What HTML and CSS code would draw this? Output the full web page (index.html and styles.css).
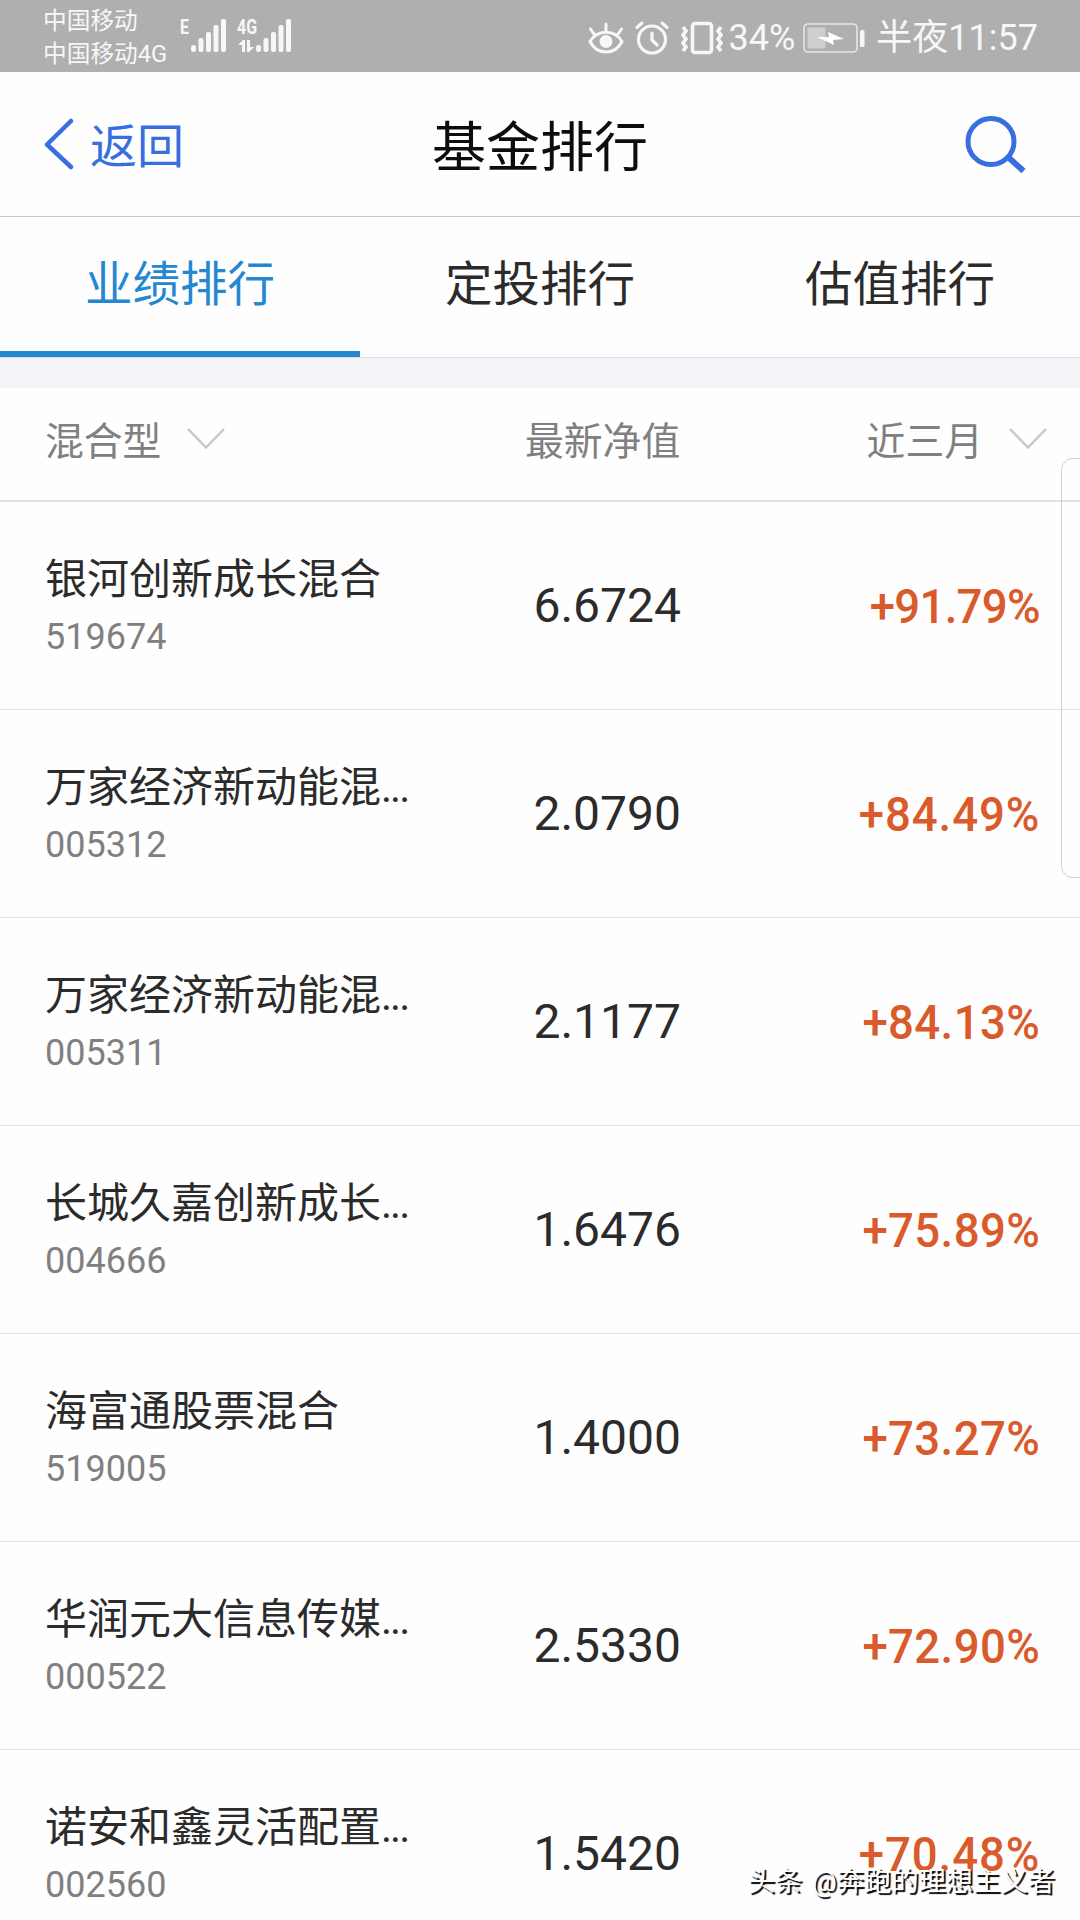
FILE: index.html
```html
<!DOCTYPE html>
<html lang="zh-CN">
<head>
    <meta charset="UTF-8">
    <meta name="viewport" content="width=device-width, initial-scale=1.0">
    <title>基金排行</title>
    <link rel="stylesheet" href="styles.css">
</head>
<body>
    <div class="status-bar">
        <div class="carriers">
            <span>中国移动</span>
            <span>中国移动4G</span>
        </div>
        <svg class="signals" width="114" height="40" viewBox="0 0 114 40">
            <g fill="#f7f7f7">
                <text class="net-label" x="0" y="19" textLength="9" lengthAdjust="spacingAndGlyphs">E</text>
                <rect x="11" y="30" width="5" height="7" rx="2.5"/>
                <rect x="18.5" y="23" width="5" height="14" rx="2"/>
                <rect x="26" y="17" width="5" height="20" rx="2"/>
                <rect x="33.5" y="10" width="5" height="27" rx="2"/>
                <rect x="41" y="4" width="5" height="33" rx="2"/>
                <text class="net-label" x="57" y="19" textLength="20" lengthAdjust="spacingAndGlyphs">4G</text>
                <path d="M58 30l5-5h2v12h-3v-7zM67 25h3v7h4l-5 5h-2z"/>
                <rect x="76" y="30" width="5" height="7" rx="2.5"/>
                <rect x="83.5" y="23" width="5" height="14" rx="2"/>
                <rect x="91" y="17" width="5" height="20" rx="2"/>
                <rect x="98.5" y="10" width="5" height="27" rx="2"/>
                <rect x="106" y="4" width="5" height="33" rx="2"/>
            </g>
        </svg>
        <div class="status-right">
            <svg width="36" height="34" viewBox="0 0 36 34" fill="none" stroke="#f7f7f7" stroke-width="3" stroke-linecap="round">
                <path d="M2 20.5C9 8 27 8 34 20.5C27 34.5 9 34.5 2 20.5z"/>
                <path d="M18 10V3M6 13L2.5 8M30 13l3.5-5"/>
                <circle cx="18" cy="20.5" r="6.5" fill="#f7f7f7" stroke="none"/>
            </svg>
            <svg width="34" height="34" viewBox="0 0 34 34" fill="none" stroke="#f7f7f7" stroke-width="3.2" stroke-linecap="round">
                <circle cx="17" cy="18.5" r="13.5"/>
                <path d="M17 12v7l5 5M2 6.500l5-4.500M32 6.500l-5-4.500"/>
            </svg>
            <svg width="44" height="34" viewBox="0 0 44 34" fill="none" stroke="#f7f7f7" stroke-width="3.6">
                <rect x="12.5" y="2.500" width="19" height="29" rx="2.5"/>
                <path d="M3 6l3 4-3 4 3 4-3 4 3 4-3 4M41 6l-3 4 3 4-3 4 3 4-3 4 3 4"/>
            </svg>
            <span class="battery-text">34%</span>
            <svg width="62" height="30" viewBox="0 0 62 30">
                <rect x="1" y="1" width="53" height="28" rx="4" fill="none" stroke="#e6e6e6" stroke-width="1.6"/>
                <rect x="4.5" y="4.500" width="18" height="21" fill="#cfcfcf"/>
                <path d="M14 14l12 0-1-5 16 7-11 1 1 5z" fill="#fff"/>
                <rect x="57" y="7" width="4.5" height="17" rx="1.5" fill="#f7f7f7"/>
            </svg>
            <span class="clock">半夜11:57</span>
        </div>
    </div>

    <div class="header">
        <a class="back">
            <svg width="30" height="52" viewBox="0 0 30 52" fill="none" stroke="#376fe0" stroke-width="4.5" stroke-linecap="round" stroke-linejoin="round">
                <path d="M27 3L3 26.5L27 49"/>
            </svg>
            <span>返回</span>
        </a>
        <h1>基金排行</h1>
        <svg class="search" width="62" height="60" viewBox="0 0 62 60" fill="none" stroke="#376fe0" stroke-width="5">
            <circle cx="26" cy="27.5" r="23"/>
            <path d="M43 43L58.5 57" stroke-width="6"/>
        </svg>
    </div>

    <div class="tabs">
        <div class="tab active">业绩排行</div>
        <div class="tab">定投排行</div>
        <div class="tab">估值排行</div>
    </div>

    <div class="filters">
        <div class="filter-type">
            <span>混合型</span>
            <svg width="40" height="24" viewBox="0 0 40 24" fill="none" stroke="#c8c8c8" stroke-width="2.5"><path d="M2 2L20 20.5L38 2"/></svg>
        </div>
        <div class="filter-value">最新净值</div>
        <div class="filter-period">
            <span>近三月</span>
            <svg width="40" height="24" viewBox="0 0 40 24" fill="none" stroke="#c8c8c8" stroke-width="2.5"><path d="M2 2L20 20.5L38 2"/></svg>
        </div>
    </div>

    <div class="fund-list">
        <div class="fund">
            <div class="fund-info">
                <div class="fund-name">银河创新成长混合</div>
                <div class="fund-code">519674</div>
            </div>
            <div class="fund-value">6.6724</div>
            <div class="fund-rate tighter"><span>+91.79%</span></div>
        </div>
        <div class="fund">
            <div class="fund-info">
                <div class="fund-name">万家经济新动能混<span class="dots">...</span></div>
                <div class="fund-code">005312</div>
            </div>
            <div class="fund-value">2.0790</div>
            <div class="fund-rate wide"><span>+84.49%</span></div>
        </div>
        <div class="fund">
            <div class="fund-info">
                <div class="fund-name">万家经济新动能混<span class="dots">...</span></div>
                <div class="fund-code">005311</div>
            </div>
            <div class="fund-value">2.1177</div>
            <div class="fund-rate"><span>+84.13%</span></div>
        </div>
        <div class="fund">
            <div class="fund-info">
                <div class="fund-name">长城久嘉创新成长<span class="dots">...</span></div>
                <div class="fund-code">004666</div>
            </div>
            <div class="fund-value">1.6476</div>
            <div class="fund-rate"><span>+75.89%</span></div>
        </div>
        <div class="fund">
            <div class="fund-info">
                <div class="fund-name">海富通股票混合</div>
                <div class="fund-code">519005</div>
            </div>
            <div class="fund-value">1.4000</div>
            <div class="fund-rate"><span>+73.27%</span></div>
        </div>
        <div class="fund">
            <div class="fund-info">
                <div class="fund-name">华润元大信息传媒<span class="dots">...</span></div>
                <div class="fund-code">000522</div>
            </div>
            <div class="fund-value">2.5330</div>
            <div class="fund-rate"><span>+72.90%</span></div>
        </div>
        <div class="fund">
            <div class="fund-info">
                <div class="fund-name">诺安和鑫灵活配置<span class="dots">...</span></div>
                <div class="fund-code">002560</div>
            </div>
            <div class="fund-value">1.5420</div>
            <div class="fund-rate wide"><span>+70.48%</span></div>
        </div>
    </div>

    <div class="side-panel"></div>
    <div class="watermark">头条 @奔跑的理想主义者</div>
</body>
</html>
```
FILE: styles.css
```css
* {
    box-sizing: border-box;
}
body {
    margin: 0;
    position: relative;
    width: 1080px;
    height: 1920px;
    overflow: hidden;
    background: #fefefe;
    color: #2b2b2b;
    font-family: Roboto, "Noto Sans CJK SC", sans-serif;
}
svg {
    display: block;
    flex: none;
}

/* status bar */
.status-bar {
    display: flex;
    height: 72px;
    padding-left: 43px;
    padding-right: 42px;
    background: #afafaf;
    color: #f7f7f7;
}
.carriers {
    display: flex;
    flex-direction: column;
    width: 137px;
    padding-top: 5px;
    font-size: 23.7px;
    line-height: 33px;
    white-space: nowrap;
}
.signals {
    margin-top: 15px;
}
.net-label {
    font-size: 20px;
    font-weight: 700;
}
.status-right {
    display: flex;
    align-items: center;
    margin-left: auto;
    height: 74px;
    padding-top: 2px;
    font-size: 36px;
    line-height: 72px;
    white-space: nowrap;
}
.status-right svg {
    margin-right: 11px;
}
.status-right svg:nth-of-type(3) {
    margin-right: 5px;
}
.battery-text {
    margin-right: 8px;
}

/* header */
.header {
    display: grid;
    grid-template-columns: 1fr auto 1fr;
    align-items: center;
    height: 145px;
    padding: 0 53px;
    border-bottom: 1px solid #c6c6c6;
}
.back {
    display: flex;
    align-items: center;
    gap: 16px;
    margin-left: -9px;
    color: #376fe0;
    font-size: 47px;
}
.back span {
    margin-top: -3px;
}
h1 {
    margin: -2px 0 0;
    color: #0d0d0d;
    font-size: 54px;
    font-weight: 400;
}
.search {
    justify-self: end;
}

/* tabs */
.tabs {
    display: flex;
    height: 141px;
    border-bottom: 1px solid #dedee2;
}
.tab {
    flex: 1;
    height: 140px;
    font-size: 47.5px;
    line-height: 137px;
    text-align: center;
}
.tab.active {
    color: #2388d1;
    border-bottom: 6px solid #2388d1;
}

/* column filters */
.filters {
    display: grid;
    grid-template-columns: 440px 325px 1fr;
    align-items: center;
    height: 144px;
    padding: 0 32px 12px 45px;
    border-top: 30px solid #f3f3f8;
    border-bottom: 2px solid #e0e0e0;
    color: #808080;
    font-size: 38.8px;
}
.filter-type,
.filter-period {
    display: flex;
    align-items: center;
    gap: 25px;
}
.filter-period {
    justify-content: flex-end;
}
.filter-type svg,
.filter-period svg {
    margin-top: 2px;
}
.filter-value {
    padding-left: 40px;
}

/* fund rows */
.fund {
    display: grid;
    grid-template-columns: 440px 196px 1fr;
    align-items: center;
    height: 208px;
    padding: 0 40px 0 45px;
    border-bottom: 1px solid #e3e3e3;
}
.fund-info {
    padding-top: 3px;
}
.fund-name {
    font-size: 42px;
    line-height: 60px;
    white-space: nowrap;
}
.dots {
    letter-spacing: -2px;
}
.fund-code {
    color: #808080;
    font-size: 36px;
    line-height: 55px;
}
.fund-value {
    font-size: 48px;
    text-align: right;
}
.fund-rate {
    padding-top: 2px;
    color: #d95a2b;
    font-size: 49px;
    font-weight: 500;
    letter-spacing: 0.4px;
    text-align: right;
}
.fund-rate.wide {
    letter-spacing: 1px;
}
.fund-rate.tighter {
    letter-spacing: -0.8px;
}
.fund-rate span {
    display: inline-block;
    transform: scaleX(0.93);
    transform-origin: right;
}

/* floating layers */
.side-panel {
    position: absolute;
    top: 458px;
    right: -12px;
    width: 31px;
    height: 420px;
    border: 1px solid #d0d0d0;
    border-radius: 12px;
}
.watermark {
    position: absolute;
    right: 25px;
    bottom: 18px;
    color: #fff;
    font-size: 27.3px;
    line-height: 40px;
    text-shadow: 2px 2px 1px #000;
    white-space: nowrap;
    word-spacing: 3px;
}
```
